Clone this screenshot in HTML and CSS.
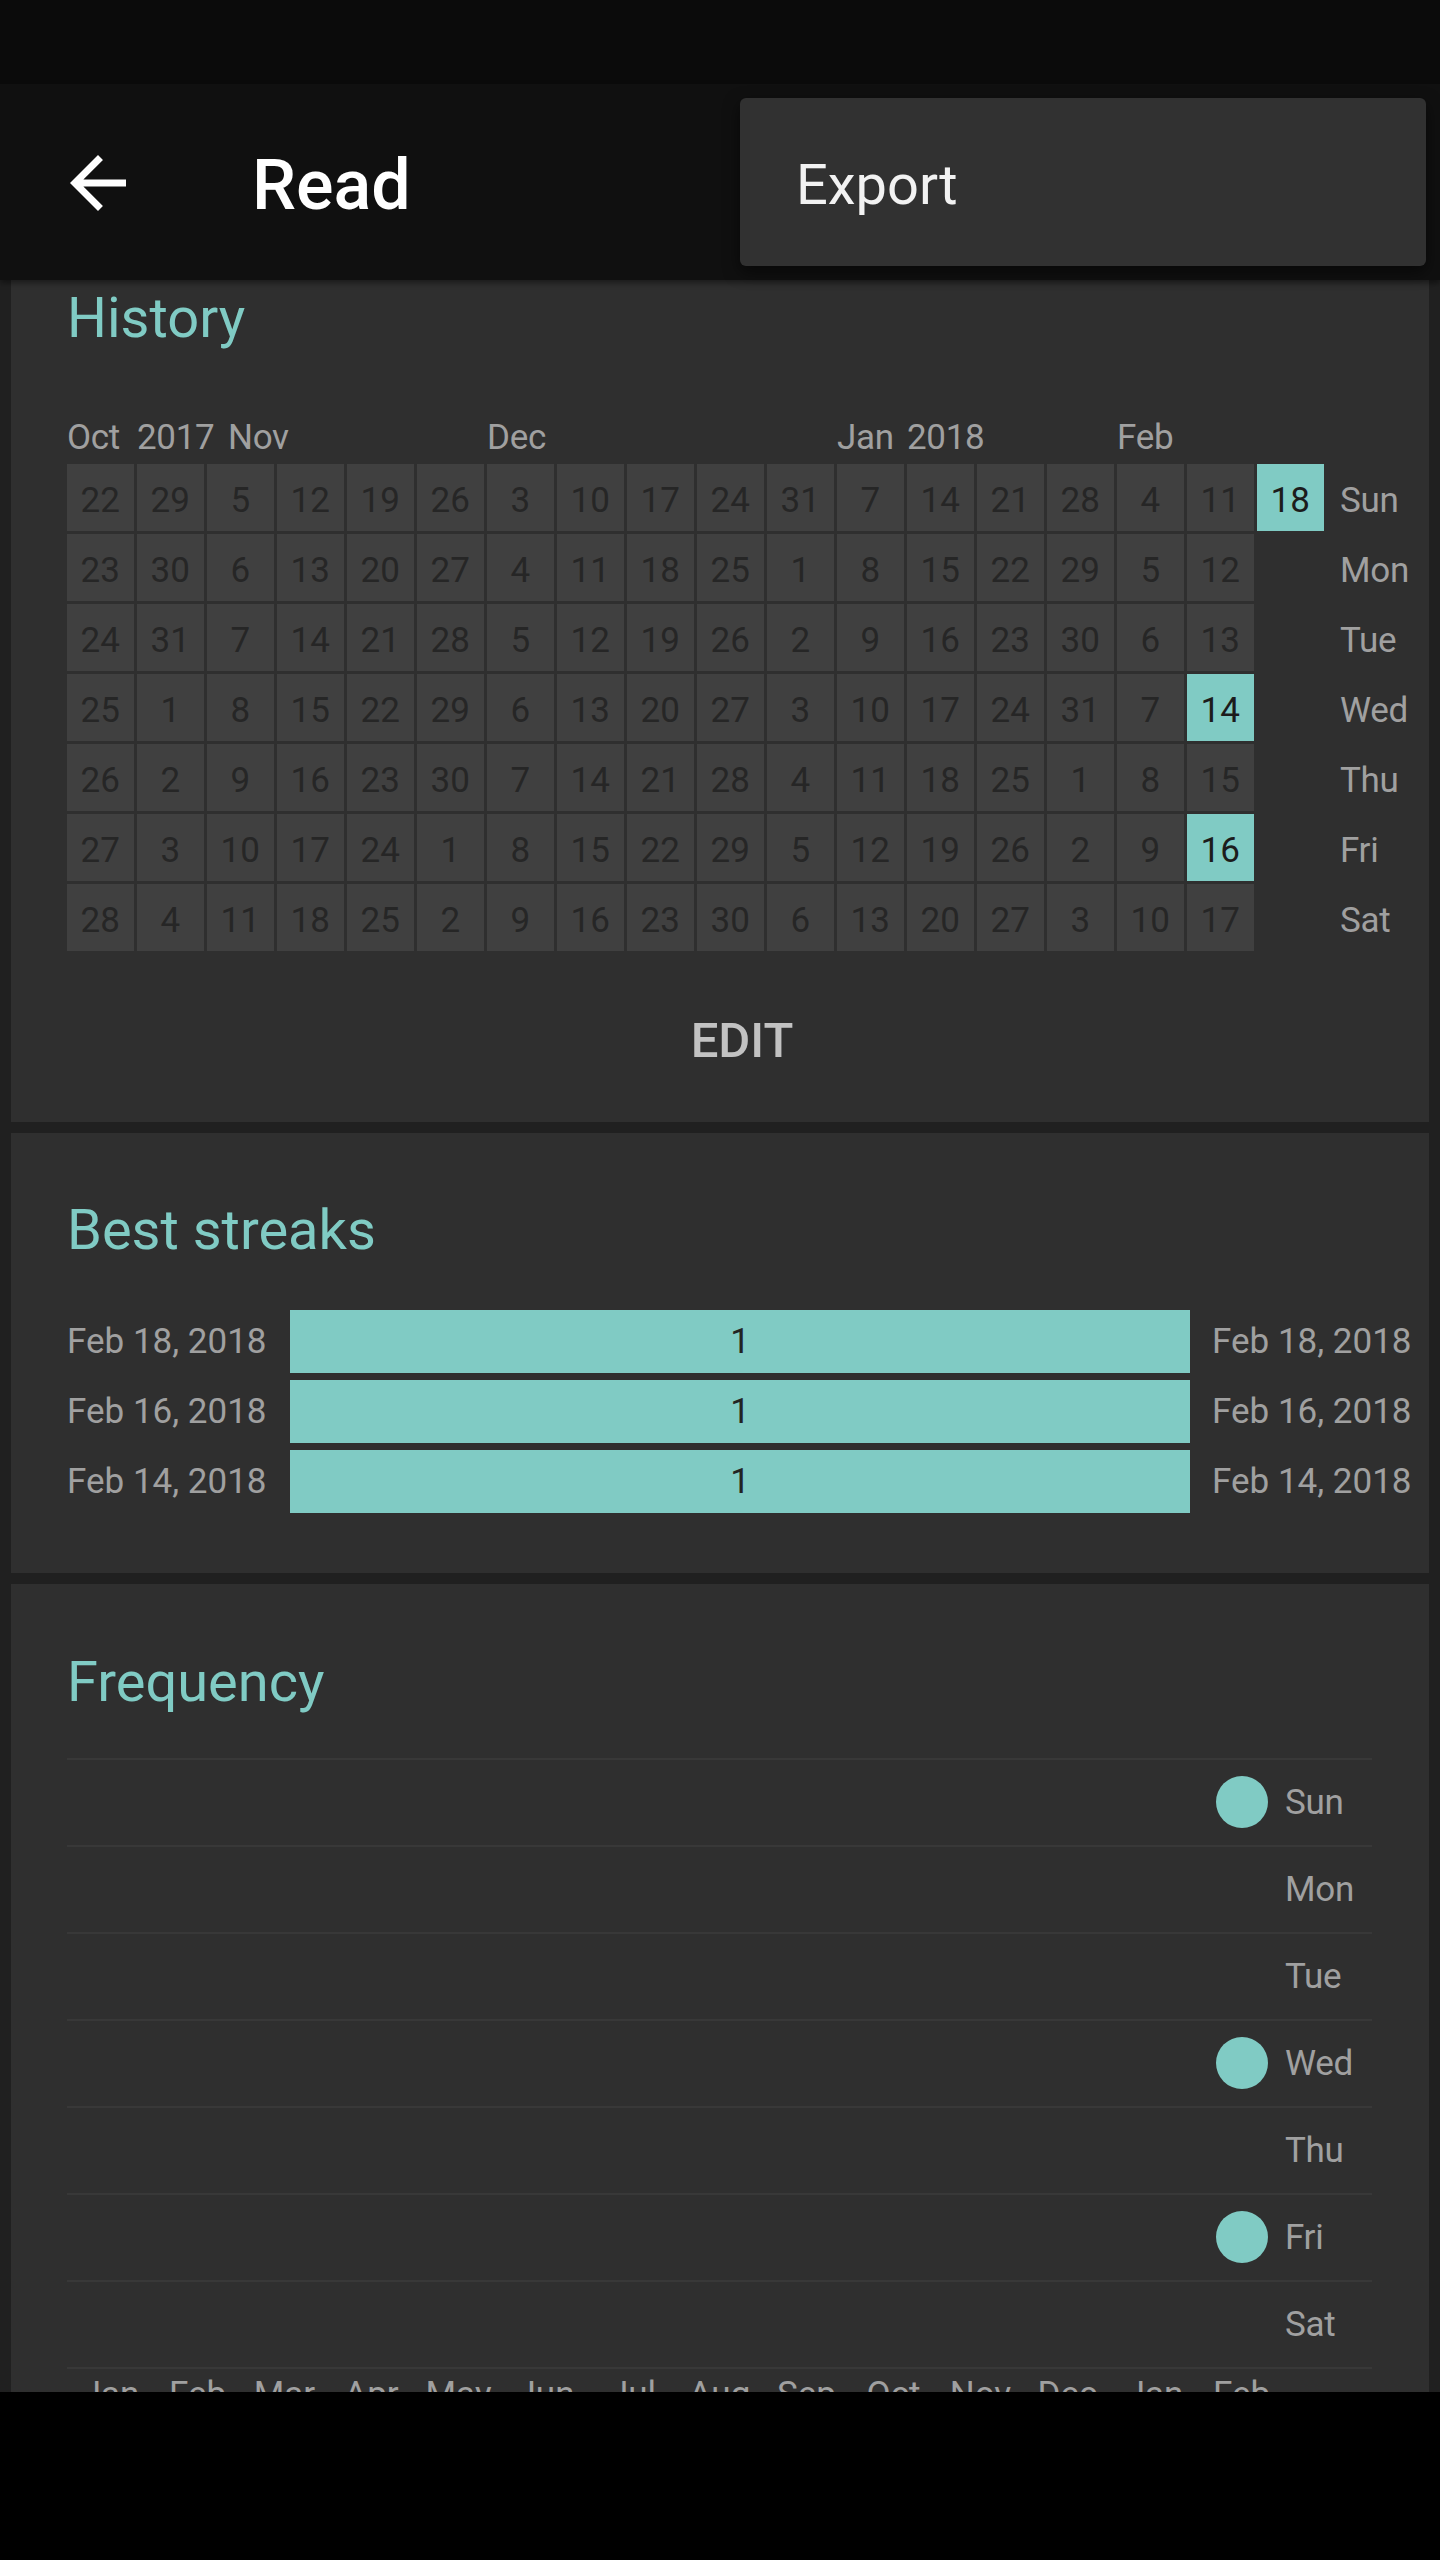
FILE: index.html
```html
<!DOCTYPE html>
<html lang="en">
<head>
<meta charset="utf-8">
<title>Read</title>
<link rel="stylesheet" href="styles.css">
</head>
<body>
<div class="screen">
  <div class="statusbar"></div>
  <header class="appbar">
    <svg class="back" viewBox="0 0 24 24" aria-hidden="true"><path d="M20 11H7.83l5.59-5.59L12 4l-8 8 8 8 1.41-1.41L7.83 13H20v-2z" fill="#ffffff"/></svg>
    <h1 class="title">Read</h1>
  </header>
  <div class="menu"><span class="menu-item">Export</span></div>

  <main class="content">
    <section class="card history">
      <h2 class="card-title">History</h2>
      <div class="months">
        <span class="m-oct">Oct</span>
        <span class="m-2017">2017</span>
        <span class="m-nov">Nov</span>
        <span class="m-dec">Dec</span>
        <span class="m-jan">Jan</span>
        <span class="m-2018">2018</span>
        <span class="m-feb">Feb</span>
      </div>
      <div class="cal">
        <div class="c">22</div><div class="c">29</div><div class="c">5</div><div class="c">12</div><div class="c">19</div><div class="c">26</div><div class="c">3</div><div class="c">10</div><div class="c">17</div><div class="c">24</div><div class="c">31</div><div class="c">7</div><div class="c">14</div><div class="c">21</div><div class="c">28</div><div class="c">4</div><div class="c">11</div><div class="c on">18</div><div class="dl">Sun</div>
        <div class="c">23</div><div class="c">30</div><div class="c">6</div><div class="c">13</div><div class="c">20</div><div class="c">27</div><div class="c">4</div><div class="c">11</div><div class="c">18</div><div class="c">25</div><div class="c">1</div><div class="c">8</div><div class="c">15</div><div class="c">22</div><div class="c">29</div><div class="c">5</div><div class="c">12</div><div class="blank"></div><div class="dl">Mon</div>
        <div class="c">24</div><div class="c">31</div><div class="c">7</div><div class="c">14</div><div class="c">21</div><div class="c">28</div><div class="c">5</div><div class="c">12</div><div class="c">19</div><div class="c">26</div><div class="c">2</div><div class="c">9</div><div class="c">16</div><div class="c">23</div><div class="c">30</div><div class="c">6</div><div class="c">13</div><div class="blank"></div><div class="dl">Tue</div>
        <div class="c">25</div><div class="c">1</div><div class="c">8</div><div class="c">15</div><div class="c">22</div><div class="c">29</div><div class="c">6</div><div class="c">13</div><div class="c">20</div><div class="c">27</div><div class="c">3</div><div class="c">10</div><div class="c">17</div><div class="c">24</div><div class="c">31</div><div class="c">7</div><div class="c on">14</div><div class="blank"></div><div class="dl">Wed</div>
        <div class="c">26</div><div class="c">2</div><div class="c">9</div><div class="c">16</div><div class="c">23</div><div class="c">30</div><div class="c">7</div><div class="c">14</div><div class="c">21</div><div class="c">28</div><div class="c">4</div><div class="c">11</div><div class="c">18</div><div class="c">25</div><div class="c">1</div><div class="c">8</div><div class="c">15</div><div class="blank"></div><div class="dl">Thu</div>
        <div class="c">27</div><div class="c">3</div><div class="c">10</div><div class="c">17</div><div class="c">24</div><div class="c">1</div><div class="c">8</div><div class="c">15</div><div class="c">22</div><div class="c">29</div><div class="c">5</div><div class="c">12</div><div class="c">19</div><div class="c">26</div><div class="c">2</div><div class="c">9</div><div class="c on">16</div><div class="blank"></div><div class="dl">Fri</div>
        <div class="c">28</div><div class="c">4</div><div class="c">11</div><div class="c">18</div><div class="c">25</div><div class="c">2</div><div class="c">9</div><div class="c">16</div><div class="c">23</div><div class="c">30</div><div class="c">6</div><div class="c">13</div><div class="c">20</div><div class="c">27</div><div class="c">3</div><div class="c">10</div><div class="c">17</div><div class="blank"></div><div class="dl">Sat</div>
      </div>
      <div class="edit-wrap"><span class="edit">EDIT</span></div>
    </section>

    <section class="card streaks">
      <h2 class="card-title">Best streaks</h2>
      <div class="streak-list">
        <span class="sd">Feb 18, 2018</span><div class="bar">1</div><span class="sd">Feb 18, 2018</span>
        <span class="sd">Feb 16, 2018</span><div class="bar">1</div><span class="sd">Feb 16, 2018</span>
        <span class="sd">Feb 14, 2018</span><div class="bar">1</div><span class="sd">Feb 14, 2018</span>
      </div>
    </section>

    <section class="card frequency">
      <h2 class="card-title">Frequency</h2>
      <div class="freq">
        <div class="frow"><div class="dotcell"><span class="dot"></span></div><span class="fl">Sun</span></div>
        <div class="frow"><div class="dotcell"></div><span class="fl">Mon</span></div>
        <div class="frow"><div class="dotcell"></div><span class="fl">Tue</span></div>
        <div class="frow"><div class="dotcell"><span class="dot"></span></div><span class="fl">Wed</span></div>
        <div class="frow"><div class="dotcell"></div><span class="fl">Thu</span></div>
        <div class="frow"><div class="dotcell"><span class="dot"></span></div><span class="fl">Fri</span></div>
        <div class="frow"><div class="dotcell"></div><span class="fl">Sat</span></div>
      </div>
      <div class="fmonths">
        <span>Jan</span><span>Feb</span><span>Mar</span><span>Apr</span><span>May</span><span>Jun</span><span>Jul</span><span>Aug</span><span>Sep</span><span>Oct</span><span>Nov</span><span>Dec</span><span>Jan</span><span>Feb</span>
      </div>
    </section>
  </main>
  <div class="navbar"></div>
</div>
</body>
</html>
```

FILE: styles.css
```css
* { box-sizing: border-box; }
html, body { margin: 0; padding: 0; background: #000; }
body { font-family: Roboto, "Liberation Sans", Arial, sans-serif; }

.screen { position: relative; width: 1440px; height: 2560px; overflow: hidden; }

.statusbar { height: 84px; background: #0b0b0b; }

.appbar {
  position: relative;
  z-index: 2;
  height: 196px;
  background: #101010;
  display: flex;
  align-items: center;
  box-shadow: 0 3px 6px rgba(0, 0, 0, 0.45);
}
.back { width: 84px; height: 84px; margin-left: 56px; margin-top: 2px; flex: none; }
.title {
  margin: 0 0 0 112px;
  padding-top: 6px;
  font-size: 70px;
  font-weight: 500;
  color: #ffffff;
  line-height: 1;
}

.menu {
  position: absolute;
  z-index: 5;
  top: 98px;
  right: 14px;
  width: 686px;
  height: 168px;
  background: #313131;
  border-radius: 6px;
  box-shadow: 0 6px 16px rgba(0, 0, 0, 0.55);
  display: flex;
  align-items: center;
  padding-left: 56px;
  padding-top: 6px;
}
.menu-item { font-size: 56px; color: #f2f2f2; line-height: 1; }

.content {
  height: 2112px;
  overflow: hidden;
  background: #202020;
  padding: 0 11px;
  display: flex;
  flex-direction: column;
  gap: 11px;
}

.card {
  background: #2f2f2f;
  padding-left: 56px;
  padding-right: 12px;
  flex: none;
}
.card-title {
  margin: 0;
  font-size: 56px;
  font-weight: 400;
  line-height: 1;
  color: #80cbc4;
}

/* History */
.history { padding-top: 10px; padding-bottom: 57px; }
.months {
  margin-top: 73.5px;
  display: grid;
  grid-template-columns: repeat(18, 66.5px);
  column-gap: 3.5px;
  font-size: 35px;
  line-height: 1;
  height: 35px;
  color: #a0a0a0;
  white-space: nowrap;
  letter-spacing: -0.3px;
}
.m-oct { grid-column: 1; }
.m-2017 { grid-column: 2; }
.m-nov { grid-column: 3; margin-left: 21px; }
.m-dec { grid-column: 7; }
.m-jan { grid-column: 12; }
.m-2018 { grid-column: 13; }
.m-feb { grid-column: 16; }

.cal {
  margin-top: 9.5px;
  display: grid;
  grid-template-columns: repeat(18, 66.5px) auto;
  grid-auto-rows: 66.5px;
  gap: 3.5px;
}
.c {
  background: #404040;
  color: #262626;
  font-size: 35px;
  line-height: 74px;
  height: 66.5px;
  text-align: center;
  overflow: visible;
}
.c.on { background: #80cbc4; color: #1c1c1c; }
.dl {
  color: #a0a0a0;
  font-size: 35px;
  line-height: 74px;
  height: 66.5px;
  padding-left: 13px;
  letter-spacing: -0.3px;
}

.edit-wrap { margin-top: 65.5px; text-align: center; height: 49px; }
.edit {
  font-size: 49px;
  font-weight: 500;
  line-height: 1;
  color: #c2c2c2;
  display: inline-block;
}

/* Streaks */
.streaks { padding-top: 69px; padding-bottom: 60px; }
.streak-list {
  margin-top: 52px;
  display: grid;
  grid-template-columns: 201px 900px 201px;
  grid-auto-rows: 63px;
  column-gap: 22px;
  row-gap: 7px;
  align-items: center;
}
.sd { font-size: 35px; color: #a0a0a0; line-height: 1; white-space: nowrap; }
.bar {
  height: 63px;
  background: #80cbc4;
  color: #232323;
  font-size: 35px;
  display: flex;
  align-items: center;
  justify-content: center;
}

/* Frequency */
.frequency { padding-top: 69.6px; flex: 1 0 auto; }
.freq {
  margin-top: 48.4px;
  width: 1305px;
  border-bottom: 2px solid #383838;
}
.frow {
  height: 87px;
  border-top: 2px solid #383838;
  display: grid;
  grid-template-columns: repeat(15, 87px);
  align-items: center;
}
.dotcell {
  grid-column: 14;
  display: flex;
  justify-content: center;
  align-items: center;
}
.dot { width: 52px; height: 52px; border-radius: 50%; background: #80cbc4; display: block; }
.fl { grid-column: 15; font-size: 35px; color: #a0a0a0; line-height: 1; letter-spacing: -0.3px; }

.fmonths {
  margin-top: 8.4px;
  width: 1218px;
  display: grid;
  grid-template-columns: repeat(14, 87px);
  font-size: 35px;
  line-height: 1;
  color: #a0a0a0;
  text-align: center;
}

.navbar { height: 168px; background: #000; }
```
